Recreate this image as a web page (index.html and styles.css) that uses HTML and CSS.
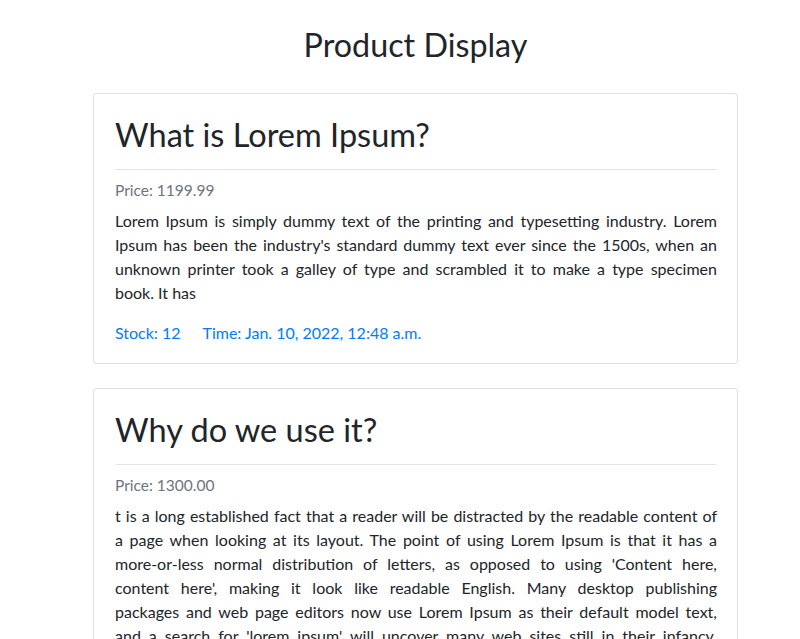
FILE: index.html
```html
<!DOCTYPE html>
<html lang="en">
<head>
<meta charset="utf-8">
<title>Product Display</title>
<link rel="stylesheet" href="styles.css">
</head>
<body>
<main class="container">
  <h1 class="page-title">Product Display</h1>

  <article class="card">
    <div class="card-body">
      <h2 class="card-title">What is Lorem Ipsum?</h2>
      <hr class="divider">
      <h6 class="price">Price: 1199.99</h6>
      <p class="desc">
        <span class="ln">Lorem Ipsum is simply dummy text of the printing and typesetting industry. Lorem</span>
        <span class="ln">Ipsum has been the industry's standard dummy text ever since the 1500s, when an</span>
        <span class="ln">unknown printer took a galley of type and scrambled it to make a type specimen</span>
        <span class="ln last">book. It has</span>
      </p>
      <div class="meta">
        <span class="stock">Stock: 12</span>
        <span class="time">Time: Jan. 10, 2022, 12:48 a.m.</span>
      </div>
    </div>
  </article>

  <article class="card">
    <div class="card-body">
      <h2 class="card-title">Why do we use it?</h2>
      <hr class="divider">
      <h6 class="price">Price: 1300.00</h6>
      <p class="desc">
        <span class="ln">t is a long established fact that a reader will be distracted by the readable content of</span>
        <span class="ln">a page when looking at its layout. The point of using Lorem Ipsum is that it has a</span>
        <span class="ln">more-or-less normal distribution of letters, as opposed to using 'Content here,</span>
        <span class="ln">content here', making it look like readable English. Many desktop publishing</span>
        <span class="ln">packages and web page editors now use Lorem Ipsum as their default model text,</span>
        <span class="ln">and a search for 'lorem ipsum' will uncover many web sites still in their infancy.</span>
        <span class="ln last">Various versions have evolved over the years</span>
      </p>
      <div class="meta">
        <span class="stock">Stock: 8</span>
        <span class="time">Time: Jan. 10, 2022, 12:50 a.m.</span>
      </div>
    </div>
  </article>
</main>
</body>
</html>
```
FILE: styles.css
```css
* { box-sizing: border-box; }

html, body {
  margin: 0;
  padding: 0;
  background: #ffffff;
}

body {
  font-family: Lato, "Open Sans", sans-serif;
  font-size: 16px;
  line-height: 24px;
  color: #212529;
}

.container {
  width: 645px;
  margin-left: 93px;
  padding-top: 26px;
}

.page-title {
  margin: 0 0 29px;
  font-size: 32.3px;
  line-height: 38px;
  font-weight: 400;
  text-align: center;
  color: #212529;
}

.card {
  border: 1px solid rgba(0, 0, 0, 0.125);
  border-radius: 4px;
  margin-bottom: 24px;
  background: #fff;
}

.card-body {
  padding: 20px 20px 18px 21px;
}

.card-title {
  margin: 0;
  font-size: 32.5px;
  line-height: 41px;
  font-weight: 400;
  color: #212529;
}

.divider {
  margin: 14px 0 0;
  border: 0;
  border-top: 1px solid rgba(0, 0, 0, 0.1);
}

.price {
  margin: 8px 0 7px;
  font-size: 15.5px;
  line-height: 24px;
  font-weight: 400;
  color: #6c757d;
}

.desc {
  margin: 0 0 16px;
  text-align: justify;
}

.ln {
  display: block;
  text-align: justify;
  text-align-last: justify;
  white-space: nowrap;
}

.ln.last {
  text-align-last: left;
}

.meta {
  display: flex;
  color: #007bff;
}

.stock {
  margin-right: 22px;
}
```
